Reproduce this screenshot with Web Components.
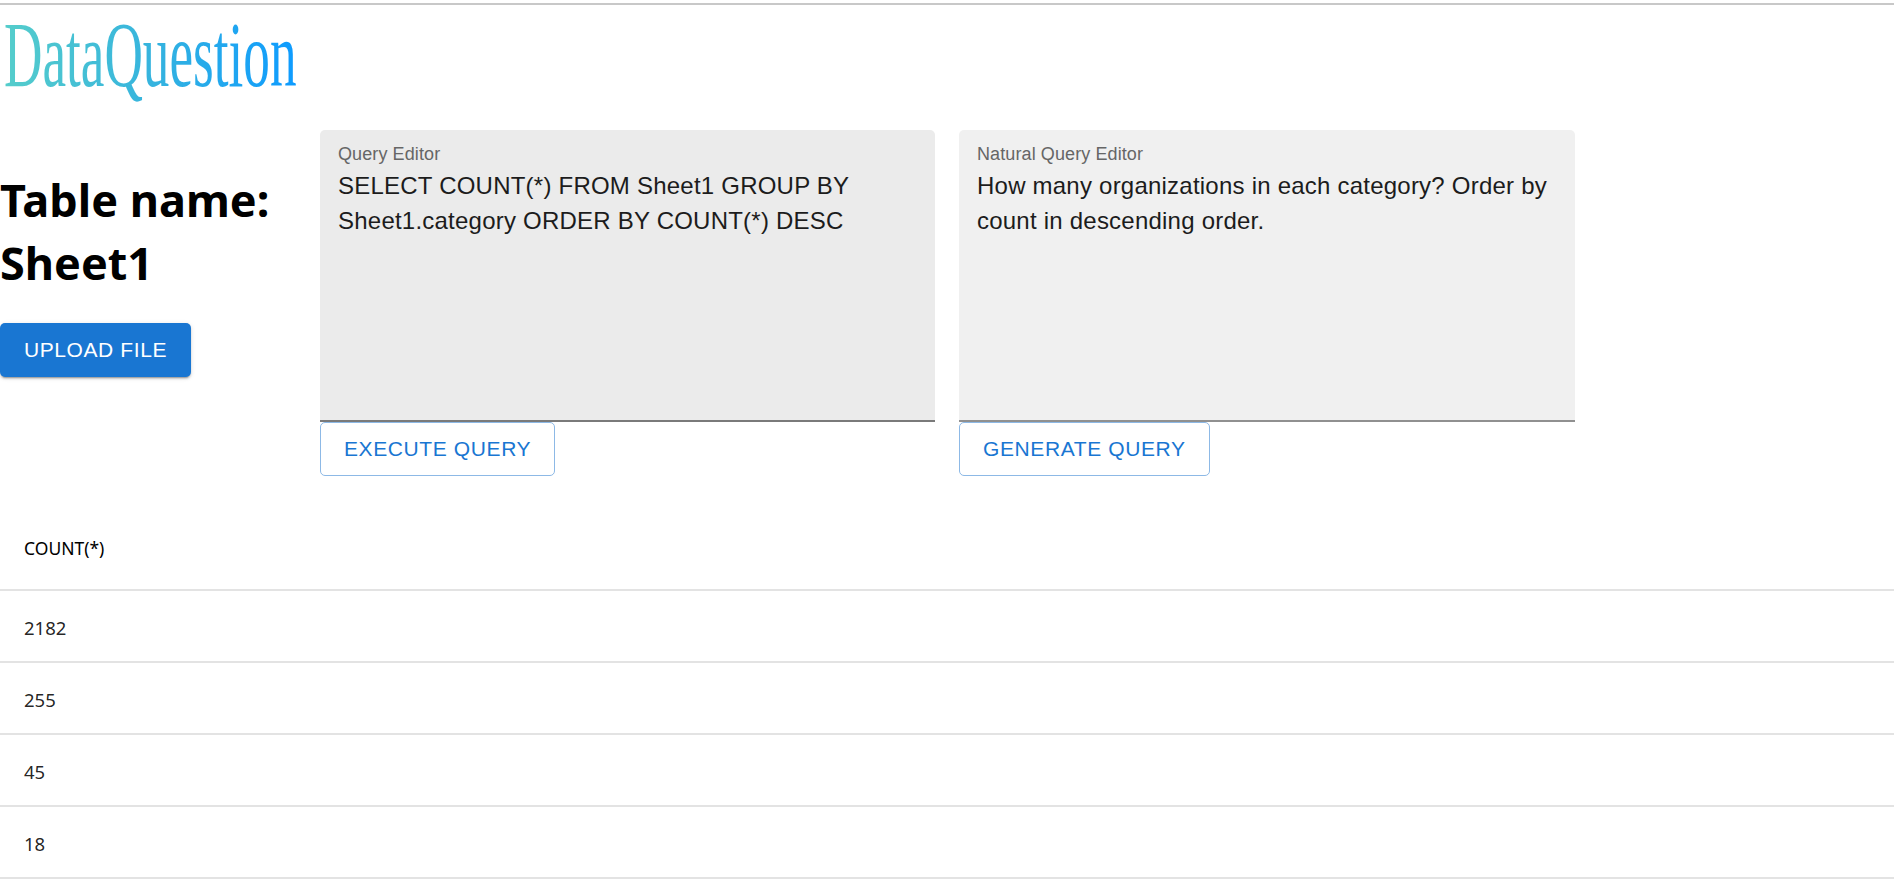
<!DOCTYPE html>
<html lang="en">
<head>
<meta charset="utf-8">
<title>DataQuestion</title>
<style>
  html, body { margin: 0; padding: 0; background: #fff; }
  body { font-family: "Liberation Sans", Arial, sans-serif; }
</style>
</head>
<body>
<app-shell>
  <brand-logo slot="logo">DataQuestion</brand-logo>
  <table-info slot="info" name="Sheet1"></table-info>
  <query-editor slot="editors" label="Query Editor" action="Execute Query" shade="#ebebeb" line="#7a7a7a">SELECT COUNT(*) FROM Sheet1 GROUP BY Sheet1.category ORDER BY COUNT(*) DESC</query-editor>
  <query-editor slot="editors" label="Natural Query Editor" action="Generate Query" shade="#f0f0f0" line="#909090">How many organizations in each category? Order by count in descending order.</query-editor>
  <result-table slot="results">
    <result-row head>COUNT(*)</result-row>
    <result-row>2182</result-row>
    <result-row>255</result-row>
    <result-row>45</result-row>
    <result-row>18</result-row>
  </result-table>
</app-shell>

<script>
class AppShell extends HTMLElement {
  constructor() {
    super()
    this.attachShadow({ mode: "open" })
    this.shadowRoot.innerHTML = `
      <style>
        :host { display: block; }
        .rule { height: 2px; margin-top: 3px; background: #c8c8c8; }
        .logo { height: 125px; }
        .top { display: flex; height: 389px; }
        .left { width: 320px; flex: none; }
        .editors { display: flex; gap: 24px; }
      </style>
      <div class="rule"></div>
      <div class="logo"><slot name="logo"></slot></div>
      <div class="top">
        <div class="left"><slot name="info"></slot></div>
        <div class="editors"><slot name="editors"></slot></div>
      </div>
      <slot name="results"></slot>
    `
  }
}

class BrandLogo extends HTMLElement {
  constructor() {
    super()
    this.attachShadow({ mode: "open" })
    this.shadowRoot.innerHTML = `
      <style>
        :host { display: block; height: 125px; padding-left: 4px; }
        span {
          display: inline-block;
          padding-bottom: 14px;
          font: 94px/98px "Liberation Serif", "Times New Roman", serif;
          white-space: nowrap;
          transform: scaleX(0.566);
          transform-origin: 0 0;
          background: linear-gradient(90deg, #55cdcb 0%, #36b4de 50%, #0d9bff 100%);
          -webkit-background-clip: text;
          background-clip: text;
          color: transparent;
        }
      </style>
      <span><slot></slot></span>
    `
  }
}

class TableInfo extends HTMLElement {
  constructor() {
    super()
    this.attachShadow({ mode: "open" })
    this.shadowRoot.innerHTML = `
      <style>
        :host { display: block; }
        h1 {
          margin: 38px 0 29px;
          font: 700 45px/63px "Noto Sans", "Open Sans", sans-serif;
          color: #000;
        }
        button {
          display: block;
          width: 191px;
          height: 54px;
          padding: 0;
          border: 0;
          border-radius: 5px;
          background: #1976d2;
          color: #fff;
          font: 21px "Liberation Sans", Arial, sans-serif;
          letter-spacing: 0.6px;
          text-transform: uppercase;
          box-shadow: 0 3px 1px -2px rgba(0,0,0,.2), 0 2px 2px 0 rgba(0,0,0,.14), 0 1px 5px 0 rgba(0,0,0,.12);
        }
      </style>
      <h1>Table name: <span class="name"></span></h1>
      <button>Upload file</button>
    `
    this.shadowRoot.querySelector(".name").textContent = this.getAttribute("name")
  }
}

class QueryEditor extends HTMLElement {
  constructor() {
    super()
    this.attachShadow({ mode: "open" })
    this.shadowRoot.innerHTML = `
      <style>
        :host { display: block; width: 615px; }
        :host(:last-of-type) { width: 616px; }
        .field {
          box-sizing: border-box;
          height: 292px;
          padding: 14px 18px 0;
          border-radius: 5px 5px 0 0;
          background: var(--shade);
          border-bottom: 2px solid var(--line);
        }
        label {
          display: block;
          font-size: 18px;
          line-height: 21px;
          letter-spacing: 0.1px;
          color: #666;
        }
        .text {
          margin-top: 3px;
          font-size: 24px;
          line-height: 35px;
          letter-spacing: 0.225px;
          color: #1c1c1c;
        }
        button {
          display: block;
          height: 54px;
          padding: 0 23px;
          background: #fff;
          border: 1px solid #8db9e6;
          border-radius: 5px;
          color: #1976d2;
          font: 21px "Liberation Sans", Arial, sans-serif;
          letter-spacing: 0.6px;
          text-transform: uppercase;
        }
      </style>
      <div class="field">
        <label></label>
        <div class="text"><slot></slot></div>
      </div>
      <button></button>
    `
    this.shadowRoot.querySelector("label").textContent = this.getAttribute("label")
    this.shadowRoot.querySelector("button").textContent = this.getAttribute("action")
    this.style.setProperty("--shade", this.getAttribute("shade"))
    this.style.setProperty("--line", this.getAttribute("line"))
  }
}

class ResultTable extends HTMLElement {
  constructor() {
    super()
    this.attachShadow({ mode: "open" })
    this.shadowRoot.innerHTML = `
      <style>
        :host { display: block; }
      </style>
      <slot></slot>
    `
  }
}

class ResultRow extends HTMLElement {
  constructor() {
    super()
    this.attachShadow({ mode: "open" })
    this.shadowRoot.innerHTML = `
      <style>
        :host {
          display: flex;
          align-items: center;
          box-sizing: border-box;
          height: 72px;
          padding: 2px 0 0 24px;
          border-bottom: 2px solid #e3e3e3;
          font: 18.5px "Noto Sans", "Open Sans", sans-serif;
          color: rgba(0,0,0,.87);
        }
        :host([head]) { padding-top: 0; padding-bottom: 12px; font-size: 17.5px; color: #000; }
      </style>
      <slot></slot>
    `
  }
}

customElements.define("app-shell", AppShell)
customElements.define("brand-logo", BrandLogo)
customElements.define("table-info", TableInfo)
customElements.define("query-editor", QueryEditor)
customElements.define("result-table", ResultTable)
customElements.define("result-row", ResultRow)
</script>
</body>
</html>
